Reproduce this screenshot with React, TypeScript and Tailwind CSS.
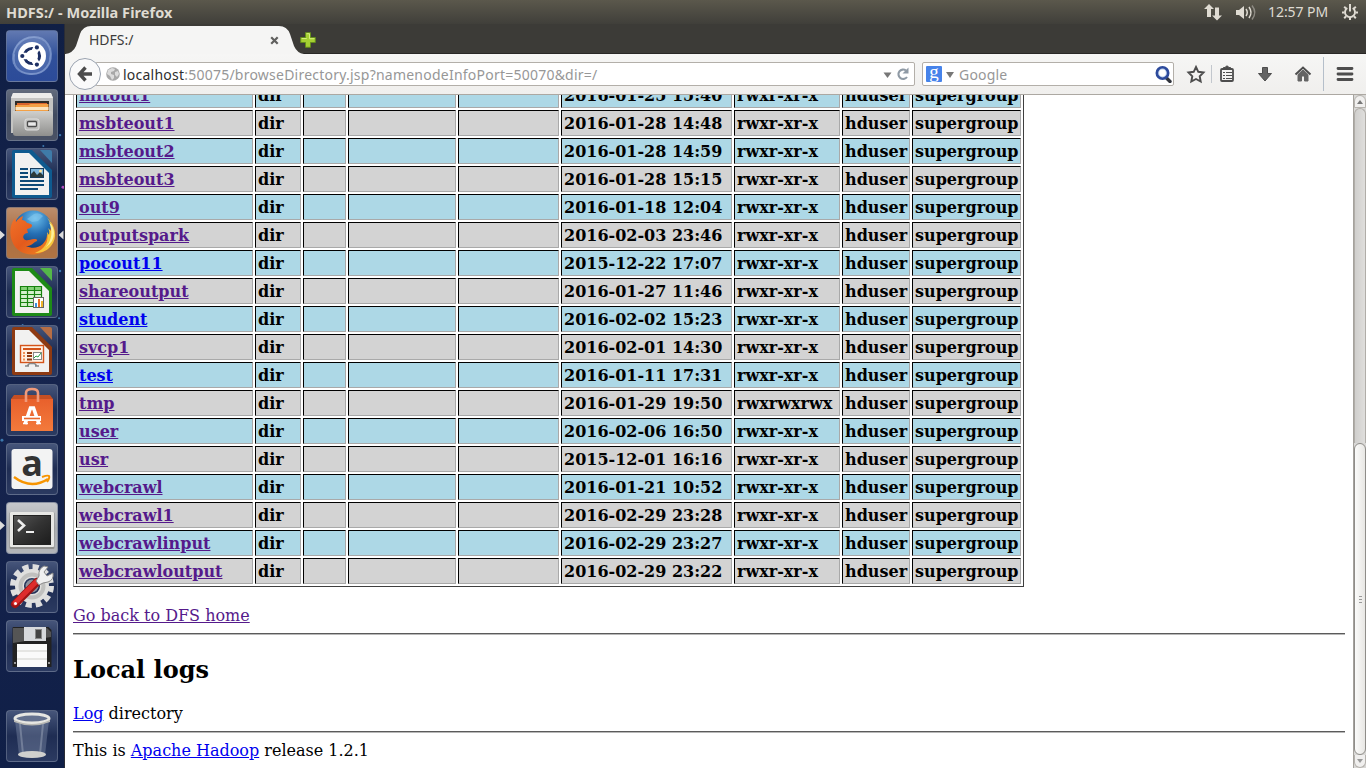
import React from "react";

const V = "text-[#551a8b]";
const U = "text-[#0000ee]";

const rows: [string, string, string, string][] = [
  ["mitout1", "2016-01-25 15:40", "rwxr-xr-x", V],
  ["msbteout1", "2016-01-28 14:48", "rwxr-xr-x", V],
  ["msbteout2", "2016-01-28 14:59", "rwxr-xr-x", V],
  ["msbteout3", "2016-01-28 15:15", "rwxr-xr-x", V],
  ["out9", "2016-01-18 12:04", "rwxr-xr-x", V],
  ["outputspark", "2016-02-03 23:46", "rwxr-xr-x", V],
  ["pocout11", "2015-12-22 17:07", "rwxr-xr-x", U],
  ["shareoutput", "2016-01-27 11:46", "rwxr-xr-x", V],
  ["student", "2016-02-02 15:23", "rwxr-xr-x", U],
  ["svcp1", "2016-02-01 14:30", "rwxr-xr-x", V],
  ["test", "2016-01-11 17:31", "rwxr-xr-x", U],
  ["tmp", "2016-01-29 19:50", "rwxrwxrwx", V],
  ["user", "2016-02-06 16:50", "rwxr-xr-x", V],
  ["usr", "2015-12-01 16:16", "rwxr-xr-x", V],
  ["webcrawl", "2016-01-21 10:52", "rwxr-xr-x", V],
  ["webcrawl1", "2016-02-29 23:28", "rwxr-xr-x", V],
  ["webcrawlinput", "2016-02-29 23:27", "rwxr-xr-x", V],
  ["webcrawloutput", "2016-02-29 23:22", "rwxr-xr-x", V],
];

const cell =
  "h-[26px] p-0 pt-[2px] pl-[2px] border border-t-black border-l-black border-b-[#a9a9a9] border-r-[#a9a9a9] leading-[22px] whitespace-nowrap align-middle";

function Table() {
  return (
    <table className="-mt-[16px] w-[951px] shrink-0 table-fixed border-separate border-spacing-[2px] border border-t-[#a9a9a9] border-l-[#a9a9a9] border-r-[#3f3f3f] border-b-[#3f3f3f] text-[16px] font-bold">
      <colgroup>
        <col className="w-[177px]" />
        <col className="w-[46px]" />
        <col className="w-[43px]" />
        <col className="w-[108px]" />
        <col className="w-[101px]" />
        <col className="w-[171px]" />
        <col className="w-[106px]" />
        <col className="w-[68px]" />
        <col className="w-[109px]" />
      </colgroup>
      <tbody>
        {rows.map(([name, time, perm, color], i) => (
          <tr key={name} className={i % 2 ? "bg-[#d3d3d3]" : "bg-[#add8e6]"}>
            <td className={cell}>
              <a className={color + " underline"}>{name}</a>
            </td>
            <td className={cell}>dir</td>
            <td className={cell} />
            <td className={cell} />
            <td className={cell} />
            <td className={cell}>{time}</td>
            <td className={cell}>{perm}</td>
            <td className={cell}>hduser</td>
            <td className={cell}>supergroup</td>
          </tr>
        ))}
      </tbody>
    </table>
  );
}

function Gradients() {
  return (
    <defs>
      <linearGradient id="metal" x1="0" y1="0" x2="0" y2="1">
        <stop offset="0" stopColor="#cfcfcd" />
        <stop offset="1" stopColor="#8f8f8d" />
      </linearGradient>
      <radialGradient id="globe" cx=".55" cy=".2" r=".8">
        <stop offset="0" stopColor="#6cc0ee" />
        <stop offset=".5" stopColor="#256fb4" />
        <stop offset="1" stopColor="#123a72" />
      </radialGradient>
      <linearGradient id="fire" x1="0" y1="0" x2="1" y2="1">
        <stop offset="0" stopColor="#f0722a" />
        <stop offset=".5" stopColor="#e35a1c" />
        <stop offset="1" stopColor="#f08a26" />
      </linearGradient>
      <linearGradient id="bag" x1="0" y1="0" x2="0" y2="1">
        <stop offset="0" stopColor="#e8602c" />
        <stop offset="1" stopColor="#f37a3c" />
      </linearGradient>
      <linearGradient id="screen" x1="0" y1="0" x2="1" y2="1">
        <stop offset="0" stopColor="#555" />
        <stop offset=".5" stopColor="#333" />
        <stop offset="1" stopColor="#1c1c1c" />
      </linearGradient>
    </defs>
  );
}

function Dash() {
  return (
    <g>
      <circle cx="26" cy="26" r="19" fill="#8fa8dc" opacity=".28" />
      <path d="M8 34C4 20 14 7 28 7c12 0 19 11 16 23M44 18c4 16-6 27-20 26C12 43 6 36 8 24" fill="none" stroke="#a9bfe8" strokeWidth="2" opacity=".5" />
      <circle cx="26" cy="26" r="14" fill="#fff" />
      <circle cx="26" cy="26" r="7.500" fill="none" stroke="#1d2f63" strokeWidth="3.200" />
      <path d="M26 26L15 26M26 26L31.500 16.500M26 26L31.500 35.500" stroke="#fff" strokeWidth="6.500" />
      <circle cx="26" cy="26" r="5.900" fill="#fff" />
      <g fill="#1d2f63">
        <circle cx="16.300" cy="26" r="2.100" />
        <circle cx="30.900" cy="17.400" r="2.100" />
        <circle cx="30.900" cy="34.600" r="2.100" />
      </g>
    </g>
  );
}

function Files() {
  return (
    <g>
      <path d="M7 4h38l2 5v35H5V9z" fill="#c4c4c2" />
      <path d="M7 4h38l2 5H5z" fill="#ececea" />
      <path d="M9 12h34v12H9z" fill="#2d2b28" />
      <path d="M11 14h30v8H11z" fill="#d9632c" />
      <path d="M9.500 16h13l2-1h18v7h-33z" fill="#f3a045" />
      <path d="M9.500 18h33v3h-33z" fill="#fbe3bd" />
      <path d="M7 22h38l2 2v20q0 3-3 3H10q-3 0-3-3z" fill="url(#metal)" />
      <rect x="19" y="30" width="14" height="11" rx="2" fill="#bdbdbb" stroke="#e0e0e0" />
      <rect x="21.500" y="32.500" width="9" height="5" rx="1" fill="#e9e9e9" stroke="#4a4a4a" strokeWidth="1.300" />
    </g>
  );
}

function Doc({ c, d, children }: { c: string; d: string; children: React.ReactNode }) {
  return (
    <g>
      <path d="M8 2h18l20 20v26q0 2-2 2H8q-2 0-2-2V4q0-2 2-2z" fill={c} />
      <path d="M34 2h10q2 0 2 2v11z" fill={d} />
      <path d="M9 5h14l20 20v22H9z" fill="#f1f1f0" />
      {children}
    </g>
  );
}

function Writer() {
  return (
    <Doc c="#0e5a8f" d="#3f7ba8">
      <path d="M14 21h8M14 25h8M14 29h8M14 33h24M14 37h24M14 41h18" stroke="#0d4a78" strokeWidth="2" />
      <rect x="24.500" y="20.500" width="13" height="9" fill="#7db5dc" stroke="#173c5c" />
      <path d="M25 29v-3l3-3 3 4 3-3 3 3v2z" fill="#2c3a3a" />
      <circle cx="34.500" cy="23" r="1.500" fill="#ffe6a0" />
    </Doc>
  );
}

function Calc() {
  return (
    <Doc c="#1d8a17" d="#54b848">
      <path d="M14 20h22v21H14z" fill="#d4f0cd" />
      <path d="M14 20h22v4H14z" fill="#86d279" />
      <path d="M14 20.500h22M14 24.500h22M14 28.500h22M14 32.500h22M14 36.500h22M14 40.500h22M14.500 20v21M21.500 20v21M28.500 20v21M35.500 20v21" stroke="#17820f" strokeWidth="1.200" fill="none" />
      <rect x="27.500" y="31.500" width="10" height="10" fill="#fff" stroke="#666" />
      <path d="M29 37h2v4h-2z" fill="#3c8edc" />
      <path d="M32 33h2v8h-2z" fill="#ea6b22" />
      <path d="M35 35h2v6h-2z" fill="#f0b429" />
    </Doc>
  );
}

function Impress() {
  return (
    <Doc c="#8e3a12" d="#b76e45">
      <rect x="14.500" y="20.500" width="23" height="17" fill="#fff1e3" stroke="#d4541a" strokeWidth="1.400" />
      <path d="M17 24h18" stroke="#d4541a" strokeWidth="2" />
      <path d="M17 28h2M17 31h2M17 34.500h2" stroke="#ef9158" strokeWidth="2" />
      <path d="M21 28h5M21 31h5M21 34.500h5" stroke="#8e3a12" strokeWidth="1.800" />
      <rect x="27.500" y="27.500" width="8" height="7" fill="#fff" stroke="#888" />
      <path d="M28 33l2-2 2 1 3-4" stroke="#26a042" fill="none" />
      <path d="M23 38.500h6M21 41l3-3M31 41l-3-3M19 41h4M29 41h4" stroke="#888" strokeWidth="1.500" />
    </Doc>
  );
}

function Fox() {
  return (
    <g>
      <circle cx="27" cy="23" r="19.500" fill="url(#globe)" />
      <path d="M28 7q5-2 9 2l-5 5-6 1-5-3z" fill="#8ccbf0" opacity=".5" />
      <path d="M46 16c4 14 0 24-9 29C24 51 10 46 6 34 3 26 4 17 9 11l1 4c1-2 4-5 7-6l-1 4c2 0 4 1 5 3 2 0 4 1 5 2 0 3-2 3-5 4l1 4c-4 0-6 4-4 6 3 3 6 0 10 0 4 0 4 2 1 3-3 2-4 4-9 4 10 5 20-1 21-11 2 1 3-4 5-12z" fill="url(#fire)" />
      <path d="M40 10c10 8 12 21 5 29-5 6-11 7-16 7 10-4 14-11 12-21l2 3c1-3 0-5-1-7l3 3c1-5-1-10-5-14z" fill="#f8c63c" />
      <path d="M43 15q6 14-3 25 8-5 8-14 0-6-5-11z" fill="#fdf09a" />
    </g>
  );
}

function Software() {
  return (
    <g>
      <path d="M5 15l3-4h36l3 4z" fill="#c64f22" />
      <path d="M5 15h42v32H5z" fill="url(#bag)" />
      <path d="M20 18v-9q0-4 6-4t6 4v9" fill="none" stroke="#f09a7a" strokeWidth="2.600" />
      <path d="M19 40l5.500-16h3L33 40" fill="none" stroke="#fff" strokeWidth="3.600" />
      <path d="M16 34.500h19" stroke="#fff" strokeWidth="5" />
      <path d="M18 34.500h16" stroke="#e8682e" strokeWidth="1.600" />
      <path d="M17 39.500h5M30 39.500h5" stroke="#fff" strokeWidth="1.500" />
    </g>
  );
}

function Amazon() {
  return (
    <g>
      <rect x="5.500" y="6" width="41" height="40" rx="3" fill="#f3f3f3" />
      <text x="26" y="33" textAnchor="middle" fontSize="36" fontWeight="700" fill="#333" fontFamily="Open Sans, sans-serif">a</text>
      <path d="M8 34q17 13 34 2" stroke="#f79400" strokeWidth="2.400" fill="none" />
      <path d="M36 34q6-2 7-1 1 2-2 6" stroke="#f79400" strokeWidth="2" fill="none" />
    </g>
  );
}

function Terminal() {
  return (
    <g>
      <rect x="3.500" y="10" width="45" height="37" rx="1.500" fill="#8f8f8d" />
      <rect x="4" y="10" width="44" height="35" rx="1" fill="#e7e7e5" />
      <rect x="7.500" y="13.500" width="37" height="29" fill="url(#screen)" stroke="#222" />
      <path d="M12 18l6 5.500-6 5.500" fill="none" stroke="#eee" strokeWidth="2.600" />
      <path d="M20 30h8" stroke="#eee" strokeWidth="2" />
    </g>
  );
}

function Settings() {
  return (
    <g>
      <circle cx="26" cy="25" r="19" fill="none" stroke="#dedede" strokeWidth="6" strokeDasharray="6 3.950" />
      <circle cx="26" cy="25" r="12.500" fill="none" stroke="#e0e0de" strokeWidth="9" />
      <circle cx="26" cy="25" r="11.500" fill="none" stroke="#c0c0be" strokeWidth="4" />
      <circle cx="26" cy="25" r="6.500" fill="#8b909c" />
      <path d="M9 43L31 21" stroke="#9c1414" strokeWidth="8" strokeLinecap="round" />
      <path d="M9 42L30 21" stroke="#de2c2c" strokeWidth="5" strokeLinecap="round" />
      <path d="M30 20l3-5q-1-7 5-10l4 1-4 5 3 4 6-3q1 7-5 9l-5 1-4 2z" fill="#f0f0f0" stroke="#8b8b8b" />
      <circle cx="9.500" cy="42.500" r="1.500" fill="#fff" />
    </g>
  );
}

function Floppy() {
  return (
    <g>
      <path d="M6.500 8q0-1 1-1h35l3 3v37h-39z" fill="#222" />
      <path d="M7 8h34l4 4v5L7 23z" fill="#555" />
      <path d="M18 7h22v14H18z" fill="#d7d9dc" />
      <rect x="29.500" y="9.500" width="6" height="9" fill="#444" stroke="#888" />
      <path d="M11 24h30v23H11z" fill="#fafafa" />
      <path d="M11 31h30M11 39h30" stroke="#d0d0cc" />
      <path d="M8 43h2M42 43h2" stroke="#999" strokeWidth="2" />
    </g>
  );
}

function Trash() {
  return (
    <g>
      <path d="M9 10l4 35q12 5 26 0l4-35z" fill="#a6b4cb" opacity=".3" />
      <path d="M14 14l3 30M37 14l-3 30" stroke="#e7edf5" strokeWidth="2" opacity=".25" />
      <ellipse cx="26" cy="44.500" rx="14" ry="3.500" fill="#d0d0ce" />
      <ellipse cx="26" cy="8.500" rx="17" ry="4.500" fill="#64718e" stroke="#e6e6e2" strokeWidth="3" />
      <path d="M8 10q18 8 36 0v2q-18 7-36 0z" fill="#b8b8b4" />
    </g>
  );
}

const plain = "bg-linear-to-b from-[#46557a] via-[#1f2d53] to-[#2b3a61]";
const tiles: { el: React.ReactNode; bg: string; name: string }[] = [
  { name: "dash", el: <Dash />, bg: "bg-linear-to-b from-[#6279b1] via-[#30509a] to-[#2c4b99]" },
  { name: "files", el: <Files />, bg: "bg-linear-to-b from-[#626b7c] via-[#414b60] to-[#4a5265]" },
  { name: "writer", el: <Writer />, bg: plain },
  { name: "firefox", el: <Fox />, bg: "bg-linear-to-b from-[#bd8e6c] via-[#a96e44] to-[#b17443]" },
  { name: "calc", el: <Calc />, bg: plain },
  { name: "impress", el: <Impress />, bg: plain },
  { name: "software", el: <Software />, bg: plain },
  { name: "amazon", el: <Amazon />, bg: plain },
  { name: "terminal", el: <Terminal />, bg: "bg-linear-to-b from-[#c5c7cb] via-[#a9acb0] to-[#b3b5b9]" },
  { name: "settings", el: <Settings />, bg: plain },
  { name: "floppy", el: <Floppy />, bg: plain },
  { name: "trash", el: <Trash />, bg: plain },
];

function Launcher() {
  return (
    <aside className="relative flex w-[65px] shrink-0 flex-col items-center gap-[7px] overflow-hidden border-r border-[#2a2c35] bg-linear-to-b from-[#101f45] via-[#16244e] to-[#101f47] pt-[6px]">
      <svg className="absolute inset-0 h-full w-full" viewBox="0 0 65 744">
        <Gradients />
        <g fill="#3c78ae">
          <circle cx="61" cy="107" r="1.200" />
          <circle cx="44" cy="118" r="1" />
          <circle cx="61" cy="245" r="1.200" />
          <circle cx="2" cy="417" r="1.500" />
          <circle cx="60" cy="293" r="1" />
          <circle cx="53" cy="351" r="1.200" />
          <circle cx="23" cy="300" r="1" />
        </g>
        <circle cx="64" cy="160" r="1.500" fill="#b04cc0" />
      </svg>
      {tiles.map((t) => (
        <div
          key={t.name}
          className={
            "relative h-[52px] w-[52px] shrink-0 rounded-[4px] border border-[#6f7b95]/60 " +
            t.bg +
            (t.name === "trash" ? " mt-[31px]" : "")
          }
        >
          <svg className="-m-px h-[52px] w-[52px] max-w-none" viewBox="0 0 52 52">
            {t.el}
          </svg>
        </div>
      ))}
      <svg className="absolute inset-0 h-full w-full" viewBox="0 0 65 744">
        <path d="M0 204l5 4.500-5 4.500zM64.500 204l-5 4.500 5 4.500zM0 499l5 4.500-5 4.500z" fill="#dcdcdc" />
      </svg>
    </aside>
  );
}

function TopPanel() {
  return (
    <header className="flex h-6 shrink-0 items-center bg-linear-to-b from-[#5b584c] to-[#403f3a] pl-[6px] font-['Noto_Sans','Open_Sans',sans-serif] text-[#dfdbd2]">
      <span className="text-[14.5px] leading-6 font-bold tracking-[0.060px]">HDFS:/ - Mozilla Firefox</span>
      <svg className="ml-auto h-6 w-[60px]" viewBox="0 0 60 24" fill="#dfdbd2">
        <path d="M9 4l5 5h-3v8H7V9H4zM17 20.500l-5-5h3v-8h4v8h3z" />
        <path d="M36 10h3l5-4v13l-5-4h-3z" />
        <path d="M46 9q2.500 3.500 0 7M49 7q4 5.500 0 11" fill="none" stroke="#dfdbd2" strokeWidth="1.500" />
        <path d="M52 5.500q5.500 7 0 14" fill="none" stroke="#8d8a82" strokeWidth="1.500" />
      </svg>
      <span className="ml-[8px] w-[61px] text-[14px] leading-6 whitespace-nowrap tracking-[-0.050px]">12:57 PM</span>
      <svg className="mr-[8px] ml-[13px] h-4 w-4" viewBox="0 0 16 16" fill="none" stroke="#dfdbd2">
        <path d="M5.300 4a5 5 0 1 0 5.400 0" strokeWidth="1.900" />
        <path d="M8 0v7.500" strokeWidth="2" />
        <path d="M0 8.500h2.500M13.500 8.500H16M2.200 2.700l1.900 1.900M13.800 2.700l-1.900 1.900M2.200 14.200l1.900-1.900M13.800 14.200l-1.900-1.900M8 13.500V16" strokeWidth="2" />
      </svg>
    </header>
  );
}

function TabBar() {
  return (
    <div className="relative flex h-[30px] shrink-0 bg-[#3c3b37] font-['Noto_Sans','Open_Sans',sans-serif]">
      <svg className="absolute inset-0 h-[30px] w-[260px]" viewBox="0 0 260 30">
        <path d="M0 29.500h260" stroke="#292826" />
        <path d="M0 30q8-1 11-8l4-12q3-8 11-8h188q8 0 11 8l4 12q3 7 10 8z" fill="#f5f5f4" />
      </svg>
      <div className="relative flex w-[230px] items-center pt-[2px] pl-[24px]">
        <span className="text-[14px] leading-5 text-[#3c3c3c]">HDFS:/</span>
        <svg className="ml-auto h-[9px] w-[9px]" viewBox="0 0 9 9">
          <path d="M1.200 1.200l6.500 6.500M7.700 1.200L1.200 7.700" stroke="#60605e" strokeWidth="2.200" />
        </svg>
        <span className="w-[16px]" />
      </div>
      <svg className="relative mt-2 ml-[5px] h-4 w-4" viewBox="0 0 16 16">
        <path d="M5.500.7h5v4.800h4.800v5h-4.800v4.800h-5v-4.800H.7v-5h4.800z" fill="#a5cf32" stroke="#648d1c" />
        <path d="M6.500 1.700h3v5h5M1.700 6.500h5" stroke="#d5ee7d" fill="none" />
      </svg>
      <span className="grow border-b border-[#292826]" />
    </div>
  );
}

function Toolbar() {
  return (
    <div className="flex h-[41px] shrink-0 items-center border-b border-[#aca8a2] bg-linear-to-b from-[#f6f6f5] to-[#f0efed] pl-[4px] font-['Noto_Sans','Open_Sans',sans-serif] text-[14px]">
      <div className="z-10 flex h-8 w-8 shrink-0 items-center justify-center rounded-full border border-[#9aa3b0] bg-[#fafafa]">
        <svg className="h-4 w-4" viewBox="0 0 16 16">
          <path d="M8.500 1.500L2.500 8l6 6.500M2.500 8H15" fill="none" stroke="#4c4c4c" strokeWidth="3.400" />
        </svg>
      </div>
      <div className="-ml-[6px] flex h-6 w-[820px] items-center rounded-[2px] border border-[#b3afa9] bg-white pl-[10px]">
        <svg className="h-[14px] w-[14px]" viewBox="0 0 14 14">
          <circle cx="7" cy="7" r="6.800" fill="#a8a8a8" />
          <path d="M2 3l4-2 3 1-1 2-3 1v2l3 1v3l-2 2-2-4-3-2zM9 5l3-1 1 3-2 3-2-2z" fill="#dcdcdc" />
        </svg>
        <span className="ml-[3px] whitespace-pre text-[#979797] tracking-[0.230px]">
          <span className="text-[#2e2e2e]">localhost</span>:50075/browseDirectory.jsp?namenodeInfoPort=50070&amp;dir=/
        </span>
        <svg className="ml-auto h-4 w-[34px]" viewBox="0 0 34 16">
          <path d="M3.500 6.500h8l-4 5.500z" fill="#777" />
          <path d="M26 4.500A4.700 4.700 0 1 0 27 11" fill="none" stroke="#8f9aa5" strokeWidth="2.100" />
          <path d="M28.500 1.500v6h-6z" fill="#8f9aa5" />
        </svg>
      </div>
      <div className="ml-[7px] flex h-6 w-[252px] items-center rounded-[2px] border border-[#b3afa9] bg-white pl-[3px]">
        <span className="flex h-4 w-4 items-center justify-center rounded-[1px] bg-[#4683ea] pb-[4px] font-['Liberation_Serif',serif] text-[19px] leading-4 text-white">g</span>
        <svg className="mt-[2px] ml-[4px] h-[6px] w-[8px]" viewBox="0 0 8 6">
          <path d="M0 0h8L4 6z" fill="#777" />
        </svg>
        <span className="ml-[5px] tracking-[0.200px] text-[#979797]">Google</span>
        <svg className="mr-[1px] ml-auto h-[17px] w-[17px]" viewBox="0 0 17 17">
          <path d="M11 11.500l4 4" stroke="#30343c" strokeWidth="3.400" strokeLinecap="round" />
          <circle cx="7.500" cy="7" r="5.700" fill="#b9cdec" stroke="#2d4a9c" strokeWidth="2.600" />
          <circle cx="7.500" cy="7" r="3.400" fill="#fff" />
        </svg>
      </div>
      <svg className="h-10 w-[192px]" viewBox="0 0 192 40" fill="none" stroke="#4d4d4d">
        <path d="M22 13l2.300 4.800 5.200.7-3.800 3.700 1 5.300L22 25l-4.700 2.500 1-5.300-3.800-3.700 5.200-.7z" strokeWidth="1.900" />
        <path d="M37.500 11v18" stroke="#c2c7cd" />
        <rect x="47" y="15" width="12" height="12" rx="1" strokeWidth="1.800" />
        <path d="M49.500 15v-1.500h2q0-1.500 1.500-1.500t1.500 1.500h2V15z" fill="#4d4d4d" />
        <path d="M49 18.500h2M52 18.500h6M49 21.500h2M52 21.500h6M49 24.500h2M52 24.500h6" strokeWidth="1.200" />
        <path d="M88.500 13.500h5v6h4L91 27l-6.500-7.500h4z" fill="#646464" />
        <path d="M121.500 20.500l7.500-7 7.500 7" strokeWidth="2" />
        <path d="M124 20.500l5-4.500 5 4.500V27h-3.500v-5h-3v5H124z" fill="#646464" stroke="#646464" />
        <path d="M149.500 3v34" stroke="#b5bfca" />
        <path d="M164 14.500h14M164 20h14M164 25.500h14" strokeWidth="2.800" strokeLinecap="round" />
      </svg>
    </div>
  );
}

function Scrollbar() {
  return (
    <div className="flex w-[13px] shrink-0 flex-col border-l border-[#a5a29d] bg-[#d9d8d6]">
      <div className="flex h-[13px] items-center justify-center rounded-t-[6px] border border-[#b5b2ad] bg-[#f0efee]">
        <svg className="h-[4px] w-[6px]" viewBox="0 0 6 4"><path d="M0 4l3-4 3 4z" fill="#777" /></svg>
      </div>
      <div className="grow rounded-t-[6px] border border-b-0 border-[#b0ada8] bg-linear-to-r from-[#d0cfcd] to-[#dfdedc]" />
      <div className="flex h-[312px] flex-col items-center justify-center gap-[2px] rounded-[6px] border border-[#8f8d89] bg-linear-to-r from-[#fbfbfa] to-[#e8e7e4]">
        <i className="h-px w-[3px] bg-[#999]" />
        <i className="h-px w-[3px] bg-[#999]" />
        <i className="h-px w-[3px] bg-[#999]" />
      </div>
      <div className="flex h-[13px] items-center justify-center rounded-b-[6px] border border-t-0 border-[#b5b2ad] bg-[#f0efee]">
        <svg className="h-[4px] w-[6px]" viewBox="0 0 6 4"><path d="M0 0h6L3 4z" fill="#999" /></svg>
      </div>
    </div>
  );
}

const rule = "mr-2 h-[2px] shrink-0 border-t border-b border-t-[#5b5b5b] border-b-[#b8b8b8]";

export default function App() {
  return (
    <div className="flex h-[768px] w-[1366px] flex-col overflow-hidden bg-white">
      <TopPanel />
      <div className="flex min-h-0 grow">
        <Launcher />
        <main className="flex min-w-0 grow flex-col">
          <TabBar />
          <Toolbar />
          <div className="flex min-h-0 grow">
            <div className="flex min-w-0 grow flex-col overflow-hidden pl-2 font-['DejaVu_Serif',serif] text-[16px] leading-[19px] text-black">
              <Table />
              <p className="mt-[19px] shrink-0">
                <a className="text-[#551a8b] underline">Go back to DFS home</a>
              </p>
              <div className={rule + " mt-[8px]"} />
              <h2 className="mt-[21px] shrink-0 text-[24px] leading-[28px] font-bold">Local logs</h2>
              <p className="mt-[20px] shrink-0">
                <a className="text-[#0000ee] underline">Log</a> directory
              </p>
              <div className={rule + " mt-[8px]"} />
              <p className="mt-[8px] shrink-0">
                This is <a className="text-[#0000ee] underline">Apache Hadoop</a> release 1.2.1
              </p>
            </div>
            <Scrollbar />
          </div>
        </main>
      </div>
    </div>
  );
}
